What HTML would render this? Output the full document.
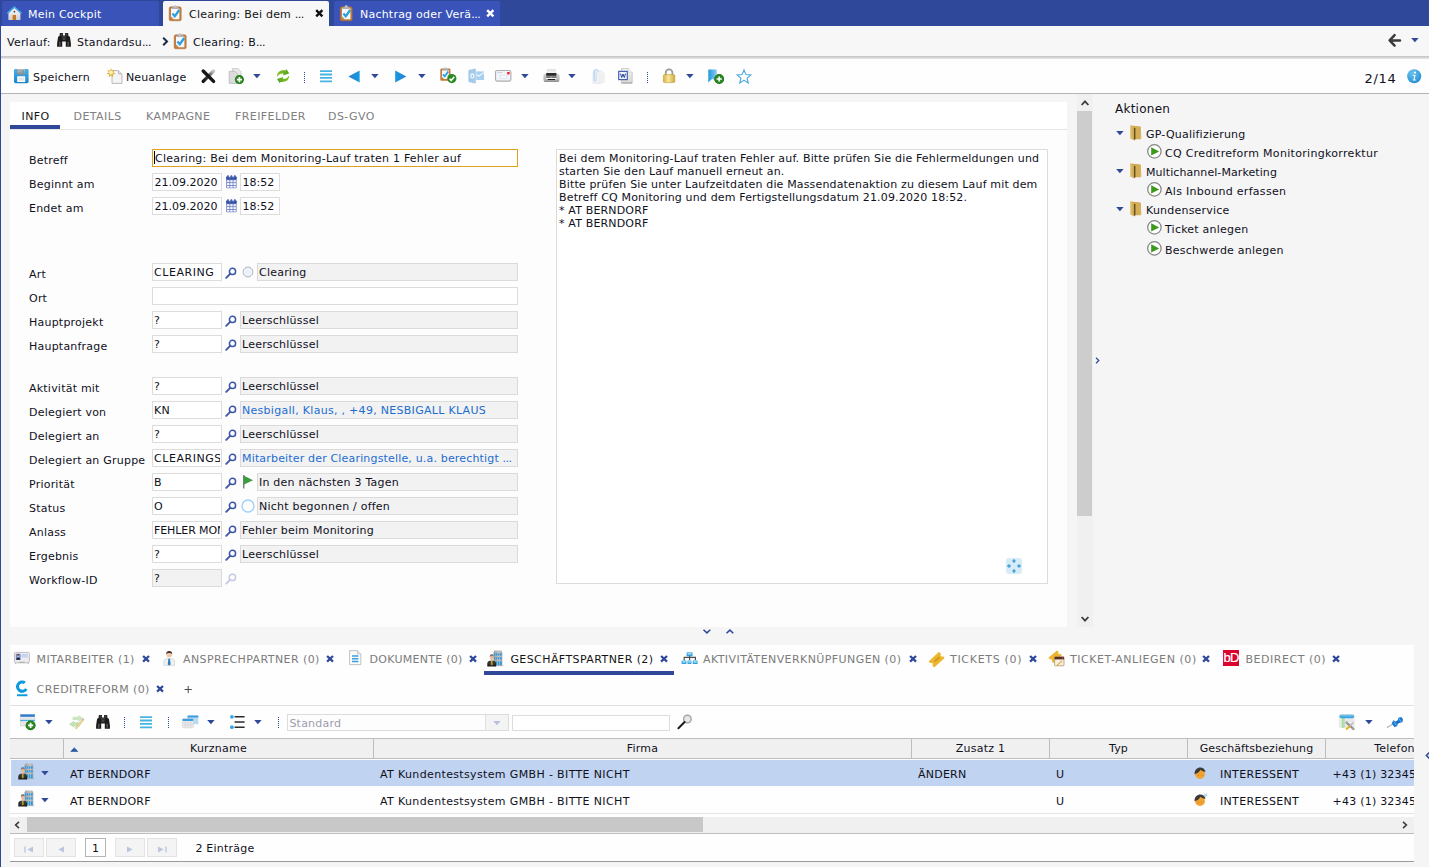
<!DOCTYPE html>
<html lang="de">
<head>
<meta charset="utf-8">
<title>Clearing: Bei dem Monitoring-Lauf traten 1 Fehler auf</title>
<style>
*{box-sizing:border-box;margin:0;padding:0}
html,body{width:1429px;height:867px;overflow:hidden;background:#f5f5f5}
body{position:relative;font-family:"DejaVu Sans","Liberation Sans",sans-serif;font-size:11px;letter-spacing:0.22px;color:#10101c;line-height:14px}
.abs{position:absolute}
svg{display:block;position:absolute;overflow:visible}
.t{position:absolute;white-space:nowrap}
#leftedge{left:0;top:0;width:1px;height:867px;background:#2f4899}
#tabbar{left:0;top:0;width:1429px;height:26px;background:#2f4899}
.ttab{position:absolute;top:1px;height:25px;border-radius:2px 2px 0 0;background:#3a53b8;color:#fff;white-space:nowrap}
.ttab.act{background:#f7f7f7;color:#141414}
.ttab .t{top:6.7px}
#hist{left:2px;top:26px;width:1427px;height:30px;background:#f7f7f7;box-shadow:-1px 0 0 #f7f7f7}
#histshadow{left:1px;top:56px;width:1428px;height:5px;background:linear-gradient(#c2c2c2,#dedede 45%,#f4f4f4 80%,#fefefe)}
#toolbar{left:2px;top:59px;width:1427px;height:34px;background:#fefefe;box-shadow:-1px 0 0 #fefefe}
#tbline{left:1px;top:93px;width:1428px;height:1px;background:#b4b4b4}
/* main panel */
#mainpanel{left:10px;top:102px;width:1057px;height:525px;background:#fdfdfd}
#maintabs{left:10px;top:102px;width:1057px;height:28px;background:#fff;border-bottom:1px solid #e4e4e4}
.mtab{position:absolute;top:7.5px;color:#808080;white-space:nowrap;font-size:11px;letter-spacing:0.42px}
.mtab.act{color:#141414}
#mtabline{left:10px;top:125px;width:50px;height:4px;background:#2f4899}
.lbl{position:absolute;left:29px;white-space:nowrap}
.inp{position:absolute;height:18px;border:1px solid #dcdcdc;background:#fff;white-space:nowrap;overflow:hidden;padding:1.8px 0 0 1px;line-height:14px}
.inp.ro{background:#f2f2f2;border-color:#dadada}
.inp.link{color:#1c6dd0}
.inp.foc{border-color:#dfa01f;padding-left:2px}
.inp.num{letter-spacing:0;padding-left:1.6px}
.inp.up{letter-spacing:0.55px}
.inp.up::after{content:"";position:absolute;right:0;top:0;width:1.5px;height:16px;background:#fff}
#memo{left:556px;top:149px;width:492px;height:435px;border:1px solid #dcdcdc;background:#fff;padding:2px 0 0 2px;line-height:13px;white-space:nowrap;overflow:hidden;letter-spacing:0.16px}
/* scrollbar */
#vs{left:1077px;top:94px;width:16px;height:533px;background:#f0f0f0}
#vsthumb{left:1077px;top:111px;width:15px;height:405px;background:#cdcdcd}
/* right panel */
.tr{position:absolute;white-space:nowrap}
/* bottom panel */
#bpanel{left:10px;top:645px;width:1404px;height:217px;background:#fefefe;border-bottom:1px solid #9a9a9a}
.btab{position:absolute;color:#7c7c7c;white-space:nowrap;font-size:11px;letter-spacing:0.42px}
.btab.act{color:#141414}
.bx{position:absolute;color:#2f4899;font-size:10px;font-weight:bold}
#th{left:10px;top:738px;width:1404px;height:21px;background:#f0f0f0;border-top:1px solid #bdbdbd;border-bottom:1px solid #bdbdbd;overflow:hidden}
.thc{position:absolute;top:0;height:19px;border-left:1px solid #bdbdbd;text-align:center;line-height:19.8px;white-space:nowrap}
.row{position:absolute;left:10px;width:1404px;height:26px;overflow:hidden}
.row .t{top:7.7px}
.pbtn{position:absolute;top:838px;width:30px;height:19px;border:1px solid #e3e3e3;background:#f4f4f4}
</style>
</head>
<body>
<div class="abs" id="tabbar">
  <div class="ttab" style="left:2px;width:157px"><svg style="left:3.4px;top:3px" width="17" height="16" viewBox="0 0 17 16"><defs><linearGradient id="hg" x1="0" y1="0" x2="0" y2="1"><stop offset="0" stop-color="#fff"/><stop offset="1" stop-color="#cfcfcf"/></linearGradient></defs><path d="M3.400 8L9.400 3 15.400 8V16H3.400z" fill="url(#hg)"/><path d="M1.800 8.800L9.400 2 17 8.800 16 10 9.400 4.200 2.800 10z" fill="#4aa6de"/><rect x="7.600" y="11" width="3.400" height="5" fill="#c9782a"/><rect x="8.600" y="6.800" width="1.600" height="1.800" rx="0.500" fill="#444"/></svg><span class="t" style="left:26px">Mein Cockpit</span></div>
  <div class="ttab act" style="left:163px;width:166px"><svg style="left:6px;top:4px" width="13" height="17" viewBox="0 0 13 17"><rect x="0.200" y="1.800" width="12" height="14" rx="1.600" fill="#c47c3a"/><rect x="0.200" y="1.800" width="12" height="14" rx="1.600" fill="none" stroke="#a8642a" stroke-width="0.500"/><path d="M2 3.400h8.400v10.800H4.600L2 11.600z" fill="#f4f7fb"/><path d="M2 11.600h2.600v2.600z" fill="#d9dde3"/><path d="M3.400 1.800h5.600l0.600 2.200H2.800z" fill="#aeb2b6"/><rect x="4.900" y="0.200" width="2.600" height="2.200" rx="1" fill="#c4c7ca"/><path d="M3.400 8.600l2.400 2.600 4.400-6.200" fill="none" stroke="#2a9ede" stroke-width="2.200"/></svg><span class="t" style="left:26px">Clearing: Bei dem <span style="letter-spacing:-0.5px">...</span></span><svg style="left:151.7px;top:8.2px" width="9" height="9" viewBox="0 0 9 9"><path d="M1.200 1.200L7.400 7.400M7.400 1.200L1.200 7.400" stroke="#111" stroke-width="2.400"/></svg></div>
  <div class="ttab" style="left:334px;width:166px"><svg style="left:6px;top:4px" width="13" height="17" viewBox="0 0 13 17"><rect x="0.200" y="1.800" width="12" height="14" rx="1.600" fill="#c47c3a"/><rect x="0.200" y="1.800" width="12" height="14" rx="1.600" fill="none" stroke="#a8642a" stroke-width="0.500"/><path d="M2 3.400h8.400v10.800H4.600L2 11.600z" fill="#f4f7fb"/><path d="M2 11.600h2.600v2.600z" fill="#d9dde3"/><path d="M3.400 1.800h5.600l0.600 2.200H2.800z" fill="#aeb2b6"/><rect x="4.900" y="0.200" width="2.600" height="2.200" rx="1" fill="#c4c7ca"/><path d="M3.400 8.600l2.400 2.600 4.400-6.200" fill="none" stroke="#2a9ede" stroke-width="2.200"/></svg><span class="t" style="left:26px">Nachtrag oder Verä<span style="letter-spacing:-0.5px">...</span></span><svg style="left:151.7px;top:8.2px" width="9" height="9" viewBox="0 0 9 9"><path d="M1.200 1.200L7.400 7.400M7.400 1.200L1.200 7.400" stroke="#fff" stroke-width="2.400"/></svg></div>
</div>
<div class="abs" id="hist">
  <span class="t" style="left:5px;top:9.7px">Verlauf:</span>
  <svg style="left:55px;top:7px" width="14" height="14" viewBox="0 0 14 14"><defs><linearGradient id="bn" x1="0" y1="0" x2="1" y2="0"><stop offset="0" stop-color="#161616"/><stop offset="0.500" stop-color="#6a6a6a"/><stop offset="1" stop-color="#161616"/></linearGradient></defs><path d="M2.900 0h3v2.600h2.200V0h3l0.400 3 1.400 0.800 1 6.800v3.200H8.800V8.600H5.200v5.200H0.100v-3.200l1-6.800 1.400-0.800z" fill="#1c1c1c"/><rect x="1.600" y="8.800" width="2.400" height="4" fill="url(#bn)"/><rect x="10" y="8.800" width="2.400" height="4" fill="url(#bn)"/><rect x="5" y="3.400" width="4" height="1" fill="#555"/><rect x="5.600" y="5.400" width="2.800" height="1.200" fill="#606060"/><rect x="3.700" y="0.400" width="1.200" height="2.400" fill="#4a4a4a"/><rect x="9.100" y="0.400" width="1.200" height="2.400" fill="#4a4a4a"/></svg>
  <span class="t" style="left:75px;top:9.7px">Standardsu<span style="letter-spacing:-0.5px">...</span></span>
  <svg style="left:160px;top:11px" width="7" height="9" viewBox="0 0 7 9"><path d="M1.2 0.8L5 4.5 1.2 8.2" fill="none" stroke="#1a2a44" stroke-width="2"/></svg>
  <svg style="left:171.6px;top:6.6px" width="13" height="17" viewBox="0 0 13 17"><rect x="0.200" y="1.800" width="12" height="14" rx="1.600" fill="#c47c3a"/><rect x="0.200" y="1.800" width="12" height="14" rx="1.600" fill="none" stroke="#a8642a" stroke-width="0.500"/><path d="M2 3.400h8.400v10.800H4.600L2 11.600z" fill="#f4f7fb"/><path d="M2 11.600h2.600v2.600z" fill="#d9dde3"/><path d="M3.400 1.800h5.600l0.600 2.200H2.800z" fill="#aeb2b6"/><rect x="4.900" y="0.200" width="2.600" height="2.200" rx="1" fill="#c4c7ca"/><path d="M3.400 8.600l2.400 2.600 4.400-6.200" fill="none" stroke="#2a9ede" stroke-width="2.200"/></svg>
  <span class="t" style="left:191px;top:9.7px">Clearing: B<span style="letter-spacing:-0.5px">...</span></span>
  <svg style="left:1386.2px;top:8.4px" width="13" height="13" viewBox="0 0 13 13"><path d="M12 6.4H2.2M6.6 1.2L1.6 6.4l5 5.2" fill="none" stroke="#3c3c3c" stroke-width="2.500" stroke-linecap="round" stroke-linejoin="round"/></svg>
  <svg style="left:1408.8px;top:12px" width="8" height="5" viewBox="0 0 8 5"><path d="M0.2 0h7.4L3.9 4.3z" fill="#2f4899"/></svg>
</div>
<div class="abs" id="histshadow"></div>
<div class="abs" id="toolbar">
  <svg style="left:12px;top:10px" width="15" height="15" viewBox="0 0 15 15"><defs><linearGradient id="sg" x1="0" y1="0" x2="0" y2="1"><stop offset="0" stop-color="#48b0ea"/><stop offset="1" stop-color="#1a84cc"/></linearGradient><linearGradient id="sg2" x1="0" y1="0" x2="0" y2="1"><stop offset="0" stop-color="#bcbcbc"/><stop offset="1" stop-color="#8a8a8a"/></linearGradient></defs><rect x="0" y="0" width="14.6" height="14.2" rx="1.4" fill="url(#sg)"/><rect x="3.2" y="0" width="7.8" height="5.6" fill="url(#sg2)"/><rect x="8.4" y="1" width="1.2" height="3.4" fill="#3aa0e0"/><rect x="3.2" y="7.2" width="8" height="5.8" rx="0.6" fill="#fff"/><rect x="4.4" y="8.4" width="5.600" height="3.400" fill="#e6e6e6"/></svg>
  <span class="t" style="left:31px;top:11.8px">Speichern</span>
  <svg style="left:104px;top:9px" width="18" height="16" viewBox="0 0 18 16"><path d="M6 2.6h6.6l3.4 3.4V15.4H6z" fill="#f4f4f4" stroke="#b4b4b4" stroke-width="0.9"/><path d="M12.6 2.6v3.4h3.4" fill="#e0e0e0" stroke="#b4b4b4" stroke-width="0.8"/><path d="M5 0l1 2.8 2.8-1-1.4 2.6 2.4 1.4-2.8 0.6 0.2 3-2.2-2-2.2 2 0.4-3-2.8-0.6 2.4-1.4L1.2 1.8l2.8 1z" fill="#dcb440"/><circle cx="5" cy="4.600" r="2" fill="#fdf0b0"/></svg>
  <span class="t" style="left:124px;top:11.8px;letter-spacing:0.12px">Neuanlage</span>
  <svg style="left:198.600px;top:9.800px" width="16" height="16" viewBox="0 0 16 16"><defs><linearGradient id="xg2" x1="0" y1="1" x2="1" y2="0"><stop offset="0" stop-color="#111"/><stop offset="0.500" stop-color="#4a4a4a"/><stop offset="1" stop-color="#c8c8c8"/></linearGradient></defs><path d="M12.600 2L2.200 12.400" stroke="url(#xg2)" stroke-width="3.400" stroke-linecap="round"/><path d="M2.200 2L12.600 12.400" stroke="#161616" stroke-width="3.400" stroke-linecap="round"/></svg>
  <svg style="left:224.800px;top:8.800px" width="17" height="17" viewBox="0 0 17 17"><path d="M5.4 0.6h5.6l3 3v8.6H5.4z" fill="#e9e9e9" stroke="#c4c4c4" stroke-width="0.8"/><path d="M2.2 3.4h6l2.6 2.8V15.4H2.2z" fill="#dcdcdc" stroke="#b8b8b8" stroke-width="0.8"/><circle cx="12.4" cy="11.6" r="4.5" fill="#2a8a22"/><circle cx="12.4" cy="11.6" r="4.0" fill="none" stroke="#1f6f1a" stroke-width="0.6"/><path d="M9.8 11.6h5.2M12.4 9.0v5.2" stroke="#fff" stroke-width="1.7"/></svg>
  <svg style="left:250.5px;top:15px" width="8" height="5" viewBox="0 0 8 5"><path d="M0.2 0h7.4L3.9 4.3z" fill="#2f4899"/></svg>
  <svg style="left:274.900px;top:9.800px" width="13" height="15" viewBox="0 0 13 15"><defs><linearGradient id="rf" x1="0" y1="0" x2="1" y2="0"><stop offset="0" stop-color="#8cc41e"/><stop offset="1" stop-color="#52a424"/></linearGradient></defs><path id="rfa" d="M0 7.200C0.200 2.600 3.800 0.800 8.800 1.400L9.400 0 12.200 4.400 6.200 6.400 6.400 4.600C3.800 4.400 1.800 5.200 0.600 7.400z" fill="url(#rf)"/><path d="M0 7.200C0.200 2.600 3.800 0.800 8.800 1.400L9.400 0 12.200 4.400 6.200 6.400 6.400 4.600C3.800 4.400 1.800 5.200 0.600 7.400z" fill="url(#rf)" transform="rotate(180 6.100 7.150)"/></svg>
  <svg style="left:302px;top:13px" width="1" height="12" viewBox="0 0 1 12"><path d="M0.5 0v12" stroke="#2f4899" stroke-width="1" stroke-dasharray="1 1"/></svg>
  <svg style="left:318px;top:10.800px" width="12" height="13" viewBox="0 0 12 13"><path d="M0 1.1h12M0 4.500h12M0 7.900h12M0 11.300h12" stroke="#48b4e2" stroke-width="1.800"/></svg>
  <svg style="left:346px;top:10.6px" width="13" height="13" viewBox="0 0 13 13"><defs><linearGradient id="tl" x1="0" y1="0" x2="1" y2="0"><stop offset="0" stop-color="#2a80d2"/><stop offset="1" stop-color="#169ade"/></linearGradient></defs><path d="M0.4 6.4L11.6 0.4v12z" fill="url(#tl)"/></svg>
  <svg style="left:368.8px;top:15px" width="8" height="5" viewBox="0 0 8 5"><path d="M0.2 0h7.4L3.9 4.3z" fill="#2f4899"/></svg>
  <svg style="left:392.4px;top:10.6px" width="13" height="13" viewBox="0 0 13 13"><defs><linearGradient id="tr" x1="0" y1="0" x2="1" y2="0"><stop offset="0" stop-color="#169ade"/><stop offset="1" stop-color="#2a80d2"/></linearGradient></defs><path d="M12.4 6.4L1.2 0.4v12z" fill="url(#tr)"/></svg>
  <svg style="left:415.8px;top:15px" width="8" height="5" viewBox="0 0 8 5"><path d="M0.2 0h7.4L3.9 4.3z" fill="#2f4899"/></svg>
  <svg style="left:438.4px;top:8.4px" width="17" height="17" viewBox="0 0 17 17"><rect x="0.300" y="1.400" width="10.200" height="12.400" rx="1.400" fill="#c47c3a"/><path d="M2 3.200h6.800v8.800H4L2 10z" fill="#f4f7fb"/><path d="M3 1.400h4.800l0.500 2H2.500z" fill="#aeb2b6"/><rect x="4.300" y="0.200" width="2.200" height="1.800" rx="0.800" fill="#c4c7ca"/><path d="M3 7.400l1.800 2 3.400-4.800" fill="none" stroke="#2a9ede" stroke-width="1.800"/><circle cx="11.800" cy="11.600" r="4.600" fill="#2a8a22"/><path d="M9.600 11.800l1.600 1.800 3-3.800" fill="none" stroke="#fff" stroke-width="1.600"/></svg>
  <svg style="left:465.8px;top:9px" width="17" height="16" viewBox="0 0 17 16"><path d="M8.200 3.400h7.800v8.600H8.200z" fill="#a9cfec"/><path d="M8.400 6.800l2.400 1.200 5-3.400" fill="none" stroke="#f2f8fd" stroke-width="1.100"/><path d="M0.400 2L7.800 0.400v15.200L0.400 14z" fill="#a4cae9"/><ellipse cx="4.300" cy="7.900" rx="1.500" ry="2.100" fill="none" stroke="#f2f8fd" stroke-width="1.200"/></svg>
  <svg style="left:493px;top:11px" width="17" height="12" viewBox="0 0 17 12"><rect x="0.5" y="0.5" width="15.4" height="10.6" rx="1.6" fill="#eef4f9" stroke="#adadad" stroke-width="1.100"/><rect x="2.2" y="2.2" width="5" height="0.9" fill="#c8ccd2"/><rect x="5.4" y="5.2" width="6.4" height="3.2" fill="#f8fafc" stroke="#d4d8dc" stroke-width="0.5"/><rect x="12.2" y="2" width="2.4" height="2.4" fill="#ee1c24"/></svg>
  <svg style="left:518.8px;top:15px" width="8" height="5" viewBox="0 0 8 5"><path d="M0.2 0h7.4L3.9 4.3z" fill="#2f4899"/></svg>
  <svg style="left:540.8px;top:10.4px" width="17" height="14" viewBox="0 0 17 14"><defs><linearGradient id="pp" x1="0" y1="0" x2="0" y2="1"><stop offset="0" stop-color="#e0e0e0"/><stop offset="1" stop-color="#fbfbfb"/></linearGradient><linearGradient id="pb" x1="0" y1="0" x2="0" y2="1"><stop offset="0" stop-color="#d6d6d6"/><stop offset="1" stop-color="#a8a8a8"/></linearGradient></defs><rect x="4.400" y="0.300" width="8.200" height="4.600" fill="url(#pp)" stroke="#d4d4d4" stroke-width="0.400"/><rect x="0.400" y="4.800" width="16.200" height="8" rx="2" fill="url(#pb)"/><rect x="3.200" y="4" width="10.200" height="2.800" fill="#2c2c2c"/><rect x="3.200" y="7.600" width="10.200" height="1.100" fill="#262626"/><rect x="7.600" y="7.600" width="1.600" height="1.100" fill="#9a9a9a"/><rect x="3" y="8.800" width="10.600" height="1.200" fill="#f6f6f6"/><rect x="4.600" y="10.100" width="7.600" height="0.900" rx="0.400" fill="#1a1a1a"/><rect x="1.200" y="11.700" width="14.600" height="1.100" rx="0.500" fill="#858585"/></svg>
  <svg style="left:565.8px;top:15px" width="8" height="5" viewBox="0 0 8 5"><path d="M0.2 0h7.4L3.9 4.3z" fill="#2f4899"/></svg>
  <svg style="left:589.4px;top:9.4px" width="14" height="16" viewBox="0 0 14 16"><path d="M6.800 3h4.400l2 2v9.600H6.800z" fill="#f6f6f6" stroke="#e6e6e6" stroke-width="0.600"/><path d="M4.400 3.600h4.800l2 2v9.400H4.400z" fill="#f5f5f5" stroke="#e2e2e2" stroke-width="0.600"/><path d="M2 4.400h5l2 2v9H2z" fill="#f3f3f3" stroke="#dedede" stroke-width="0.600"/><path d="M3.200 12V3.600a1.900 1.900 0 0 1 3.800 0" fill="none" stroke="#b6d6fc" stroke-width="1.400"/><path d="M3.200 12a1 1 0 0 0 2 0V5" fill="none" stroke="#c4defc" stroke-width="1.200"/></svg>
  <svg style="left:616px;top:9px" width="16" height="16" viewBox="0 0 16 16"><defs><linearGradient id="wd" x1="0" y1="0" x2="0" y2="1"><stop offset="0" stop-color="#f2f2f2"/><stop offset="1" stop-color="#d8d8d8"/></linearGradient></defs><path d="M3.400 0.500h7l3.800 3.600v10.800H3.400z" fill="url(#wd)" stroke="#bcbcbc" stroke-width="0.700"/><path d="M10.400 0.500v3.600h3.800" fill="#fafafa" stroke="#c8c8c8" stroke-width="0.500"/><path d="M3.400 15.100h10.800" stroke="#9c9c9c" stroke-width="0.900"/><rect x="0.700" y="3.400" width="8.600" height="8.200" fill="#f4f6fc" stroke="#4662b0" stroke-width="1.200"/><path d="M2.500 5.600l1.200 4 1.300-3.600 1.300 3.600 1.200-4" fill="none" stroke="#2444a0" stroke-width="1"/></svg>
  <svg style="left:645px;top:13px" width="1" height="12" viewBox="0 0 1 12"><path d="M0.5 0v12" stroke="#2f4899" stroke-width="1" stroke-dasharray="1 1"/></svg>
  <svg style="left:660.6px;top:9.4px" width="13" height="15" viewBox="0 0 13 15"><defs><linearGradient id="lg" x1="0" y1="0" x2="1" y2="0"><stop offset="0" stop-color="#d8b246"/><stop offset="0.45" stop-color="#f6e79c"/><stop offset="1" stop-color="#d2a83c"/></linearGradient></defs><path d="M2.800 7V4.600a3.300 3.300 0 0 1 6.600 0V7" fill="none" stroke="#9a9a9a" stroke-width="1.800"/><rect x="0.4" y="6.6" width="11.4" height="8" rx="1.2" fill="url(#lg)" stroke="#c09a34" stroke-width="0.6"/></svg>
  <svg style="left:683.6px;top:15px" width="8" height="5" viewBox="0 0 8 5"><path d="M0.2 0h7.4L3.9 4.3z" fill="#2f4899"/></svg>
  <svg style="left:706px;top:9.8px" width="17" height="16" viewBox="0 0 17 16"><defs><linearGradient id="bg" x1="0" y1="0" x2="1" y2="0"><stop offset="0" stop-color="#1f96de"/><stop offset="1" stop-color="#8cccf0"/></linearGradient></defs><path d="M0.3 0.4h8.4v13.2L4.5 9.6 0.3 13.6z" fill="url(#bg)"/><circle cx="11.2" cy="10" r="4.9" fill="#2a8a22"/><circle cx="11.2" cy="10" r="4.4" fill="none" stroke="#1f6f1a" stroke-width="0.6"/><path d="M8.6 10h5.2M11.2 7.4v5.2" stroke="#fff" stroke-width="1.7"/></svg>
  <svg style="left:734px;top:9.6px" width="16" height="15" viewBox="0 0 16 15"><path d="M8 1l1.9 4.6 5 0.4-3.8 3.2 1.2 4.8L8 11.4 3.7 14l1.2-4.8L1.1 6l5-0.4z" fill="#fff" stroke="#4aa8de" stroke-width="1.1" stroke-linejoin="miter"/></svg>
  <span class="t" style="left:1362.5px;top:12px;font-size:13px;letter-spacing:0.7px;line-height:15px">2/14</span>
  <svg style="left:1404.8px;top:9.8px" width="15" height="15" viewBox="0 0 15 15"><defs><radialGradient id="ig" cx="0.4" cy="0.3" r="0.8"><stop offset="0" stop-color="#6cc4ee"/><stop offset="1" stop-color="#1c8cd0"/></radialGradient></defs><circle cx="7.2" cy="7.2" r="7" fill="url(#ig)"/><circle cx="8" cy="3.6" r="1.1" fill="#fff"/><path d="M6.2 6h2.4l-1 4.6h1.2v1H5.8v-1h0.8l0.7-3.6H6z" fill="#fff"/></svg>
</div>
<div class="abs" id="tbline"></div>
<div class="abs" id="mainpanel"></div>
<div class="abs" id="maintabs">
  <span class="mtab act" style="left:11.5px">INFO</span>
  <span class="mtab" style="left:63.5px">DETAILS</span>
  <span class="mtab" style="left:136px">KAMPAGNE</span>
  <span class="mtab" style="left:225px">FREIFELDER</span>
  <span class="mtab" style="left:318px">DS-GVO</span>
</div>
<div class="abs" id="mtabline"></div>
<span class="lbl" style="top:153.9px">Betreff</span>
<div class="inp foc" style="left:152px;top:149px;width:366px">Clearing: Bei dem Monitoring-Lauf traten 1 Fehler auf</div>
<span class="lbl" style="top:177.9px">Beginnt am</span>
<div class="inp num" style="left:152px;top:173px;width:70px">21.09.2020</div>
<svg style="left:225.800px;top:175.4px" width="11" height="14" viewBox="0 0 11 14"><rect x="0.200" y="1.600" width="10.400" height="11.600" rx="0.800" fill="#6f83c6"/><rect x="0.200" y="1.600" width="10.400" height="3" rx="0.600" fill="#3550a6"/><path d="M2 0.200v2.200M5.400 0.200v2.200M8.800 0.200v2.200" stroke="#4a62b0" stroke-width="1.500"/><path d="M3.700 1v1.400M7.100 1v1.400" stroke="#e8ecf8" stroke-width="1"/><g fill="#fff"><rect x="1.100" y="5.300" width="2.300" height="1.900"/><rect x="4.300" y="5.300" width="2.300" height="1.900"/><rect x="7.500" y="5.300" width="2.300" height="1.900"/><rect x="1.100" y="8.100" width="2.300" height="1.900"/><rect x="4.300" y="8.100" width="2.300" height="1.900"/><rect x="7.500" y="8.100" width="2.300" height="1.900"/><rect x="1.100" y="10.900" width="2.300" height="1.700"/><rect x="4.300" y="10.900" width="2.300" height="1.700"/><rect x="7.500" y="10.900" width="2.300" height="1.700"/></g></svg>
<div class="inp num" style="left:240px;top:173px;width:40px">18:52</div>
<span class="lbl" style="top:201.9px">Endet am</span>
<div class="inp num" style="left:152px;top:197px;width:70px">21.09.2020</div>
<svg style="left:225.800px;top:199.4px" width="11" height="14" viewBox="0 0 11 14"><rect x="0.200" y="1.600" width="10.400" height="11.600" rx="0.800" fill="#6f83c6"/><rect x="0.200" y="1.600" width="10.400" height="3" rx="0.600" fill="#3550a6"/><path d="M2 0.200v2.200M5.400 0.200v2.200M8.800 0.200v2.200" stroke="#4a62b0" stroke-width="1.500"/><path d="M3.700 1v1.400M7.100 1v1.400" stroke="#e8ecf8" stroke-width="1"/><g fill="#fff"><rect x="1.100" y="5.300" width="2.300" height="1.900"/><rect x="4.300" y="5.300" width="2.300" height="1.900"/><rect x="7.500" y="5.300" width="2.300" height="1.900"/><rect x="1.100" y="8.100" width="2.300" height="1.900"/><rect x="4.300" y="8.100" width="2.300" height="1.900"/><rect x="7.500" y="8.100" width="2.300" height="1.900"/><rect x="1.100" y="10.900" width="2.300" height="1.700"/><rect x="4.300" y="10.900" width="2.300" height="1.700"/><rect x="7.500" y="10.900" width="2.300" height="1.700"/></g></svg>
<div class="inp num" style="left:240px;top:197px;width:40px">18:52</div>
<span class="lbl" style="top:267.9px">Art</span>
<div class="inp up" style="left:152px;top:263px;width:70px">CLEARING</div>
<svg style="left:225px;top:266.8px" width="12" height="12" viewBox="0 0 12 12"><circle cx="7.500" cy="4.400" r="3.100" fill="none" stroke="#3d56a6" stroke-width="1.500"/><path d="M5.200 6.800L1.200 10.800" stroke="#3d56a6" stroke-width="1.900" stroke-linecap="round"/></svg>
<svg style="left:242px;top:266px" width="12" height="12" viewBox="0 0 12 12"><circle cx="6" cy="6" r="4.9" fill="#eef2fb" stroke="#b0b5ba" stroke-width="1"/></svg>
<div class="inp ro" style="left:257px;top:263px;width:261px">Clearing</div>
<span class="lbl" style="top:291.9px">Ort</span>
<div class="inp" style="left:152px;top:287px;width:366px"></div>
<span class="lbl" style="top:315.9px">Hauptprojekt</span>
<div class="inp" style="left:152px;top:311px;width:70px">?</div>
<svg style="left:225px;top:314.8px" width="12" height="12" viewBox="0 0 12 12"><circle cx="7.500" cy="4.400" r="3.100" fill="none" stroke="#3d56a6" stroke-width="1.500"/><path d="M5.200 6.800L1.200 10.800" stroke="#3d56a6" stroke-width="1.900" stroke-linecap="round"/></svg>
<div class="inp ro" style="left:240px;top:311px;width:278px">Leerschlüssel</div>
<span class="lbl" style="top:339.9px">Hauptanfrage</span>
<div class="inp" style="left:152px;top:335px;width:70px">?</div>
<svg style="left:225px;top:338.8px" width="12" height="12" viewBox="0 0 12 12"><circle cx="7.500" cy="4.400" r="3.100" fill="none" stroke="#3d56a6" stroke-width="1.500"/><path d="M5.200 6.800L1.200 10.800" stroke="#3d56a6" stroke-width="1.900" stroke-linecap="round"/></svg>
<div class="inp ro" style="left:240px;top:335px;width:278px">Leerschlüssel</div>
<span class="lbl" style="top:381.9px">Aktivität mit</span>
<div class="inp" style="left:152px;top:377px;width:70px">?</div>
<svg style="left:225px;top:380.8px" width="12" height="12" viewBox="0 0 12 12"><circle cx="7.500" cy="4.400" r="3.100" fill="none" stroke="#3d56a6" stroke-width="1.500"/><path d="M5.200 6.800L1.200 10.800" stroke="#3d56a6" stroke-width="1.900" stroke-linecap="round"/></svg>
<div class="inp ro" style="left:240px;top:377px;width:278px">Leerschlüssel</div>
<span class="lbl" style="top:405.9px">Delegiert von</span>
<div class="inp" style="left:152px;top:401px;width:70px">KN</div>
<svg style="left:225px;top:404.8px" width="12" height="12" viewBox="0 0 12 12"><circle cx="7.500" cy="4.400" r="3.100" fill="none" stroke="#3d56a6" stroke-width="1.500"/><path d="M5.200 6.800L1.200 10.800" stroke="#3d56a6" stroke-width="1.900" stroke-linecap="round"/></svg>
<div class="inp ro link" style="left:240px;top:401px;width:278px"><span style="letter-spacing:0.29px">Nesbigall, Klaus, , +49, NESBIGALL KLAUS</span></div>
<span class="lbl" style="top:429.9px">Delegiert an</span>
<div class="inp" style="left:152px;top:425px;width:70px">?</div>
<svg style="left:225px;top:428.8px" width="12" height="12" viewBox="0 0 12 12"><circle cx="7.500" cy="4.400" r="3.100" fill="none" stroke="#3d56a6" stroke-width="1.500"/><path d="M5.200 6.800L1.200 10.800" stroke="#3d56a6" stroke-width="1.900" stroke-linecap="round"/></svg>
<div class="inp ro" style="left:240px;top:425px;width:278px">Leerschlüssel</div>
<span class="lbl" style="top:453.9px">Delegiert an Gruppe</span>
<div class="inp up" style="left:152px;top:449px;width:70px">CLEARINGS</div>
<svg style="left:225px;top:452.8px" width="12" height="12" viewBox="0 0 12 12"><circle cx="7.500" cy="4.400" r="3.100" fill="none" stroke="#3d56a6" stroke-width="1.500"/><path d="M5.200 6.800L1.200 10.800" stroke="#3d56a6" stroke-width="1.900" stroke-linecap="round"/></svg>
<div class="inp ro link" style="left:240px;top:449px;width:278px"><span style="letter-spacing:0.17px">Mitarbeiter der Clearingstelle, u.a. berechtigt <span style="letter-spacing:-0.500px">...</span></span></div>
<span class="lbl" style="top:477.9px">Priorität</span>
<div class="inp" style="left:152px;top:473px;width:70px">B</div>
<svg style="left:225px;top:476.8px" width="12" height="12" viewBox="0 0 12 12"><circle cx="7.500" cy="4.400" r="3.100" fill="none" stroke="#3d56a6" stroke-width="1.500"/><path d="M5.200 6.800L1.200 10.800" stroke="#3d56a6" stroke-width="1.900" stroke-linecap="round"/></svg>
<svg style="left:242.6px;top:475.2px" width="11" height="14" viewBox="0 0 11 14"><path d="M0.8 0v13.6" stroke="#4a5c62" stroke-width="1.1"/><path d="M0.6 0.4L10 5.2 0.6 9.8z" fill="#3d9b42"/></svg>
<div class="inp ro" style="left:257px;top:473px;width:261px">In den nächsten 3 Tagen</div>
<span class="lbl" style="top:501.9px">Status</span>
<div class="inp" style="left:152px;top:497px;width:70px">O</div>
<svg style="left:225px;top:500.8px" width="12" height="12" viewBox="0 0 12 12"><circle cx="7.500" cy="4.400" r="3.100" fill="none" stroke="#3d56a6" stroke-width="1.500"/><path d="M5.200 6.800L1.200 10.800" stroke="#3d56a6" stroke-width="1.900" stroke-linecap="round"/></svg>
<svg style="left:241px;top:499px" width="14" height="14" viewBox="0 0 14 14"><circle cx="7" cy="7" r="6" fill="#fff" stroke="#9ccffb" stroke-width="1.300"/></svg>
<div class="inp ro" style="left:257px;top:497px;width:261px">Nicht begonnen / offen</div>
<span class="lbl" style="top:525.9px">Anlass</span>
<div class="inp up" style="left:152px;top:521px;width:70px"><span style="letter-spacing:-0.1px">FEHLER MON</span></div>
<svg style="left:225px;top:524.8px" width="12" height="12" viewBox="0 0 12 12"><circle cx="7.500" cy="4.400" r="3.100" fill="none" stroke="#3d56a6" stroke-width="1.500"/><path d="M5.200 6.800L1.200 10.800" stroke="#3d56a6" stroke-width="1.900" stroke-linecap="round"/></svg>
<div class="inp ro" style="left:240px;top:521px;width:278px">Fehler beim Monitoring</div>
<span class="lbl" style="top:549.9px">Ergebnis</span>
<div class="inp" style="left:152px;top:545px;width:70px">?</div>
<svg style="left:225px;top:548.8px" width="12" height="12" viewBox="0 0 12 12"><circle cx="7.500" cy="4.400" r="3.100" fill="none" stroke="#3d56a6" stroke-width="1.500"/><path d="M5.200 6.800L1.200 10.800" stroke="#3d56a6" stroke-width="1.900" stroke-linecap="round"/></svg>
<div class="inp ro" style="left:240px;top:545px;width:278px">Leerschlüssel</div>
<span class="lbl" style="top:573.9px">Workflow-ID</span>
<div class="inp ro" style="left:152px;top:569px;width:70px">?</div>
<svg style="left:225px;top:572.8px" width="12" height="12" viewBox="0 0 12 12"><circle cx="7.4" cy="4.4" r="3.2" fill="none" stroke="#c4cce4" stroke-width="1.5"/><path d="M5 6.8L1.2 10.6" stroke="#c4cce4" stroke-width="1.9" stroke-linecap="round"/></svg>
<div class="abs" id="memo">Bei dem Monitoring-Lauf traten Fehler auf. Bitte prüfen Sie die Fehlermeldungen und<br>starten Sie den Lauf manuell erneut an.<br>Bitte prüfen Sie unter Laufzeitdaten die Massendatenaktion zu diesem Lauf mit dem<br>Betreff CQ Monitoring und dem Fertigstellungsdatum 21.09.2020 18:52.<br>* AT BERNDORF<br>* AT BERNDORF</div>
<svg style="left:1006px;top:558px" width="16" height="16" viewBox="0 0 16 16"><rect x="0" y="0" width="16" height="16" rx="3" fill="#d7ecf8"/><g fill="#4aa4d6"><path d="M8 0.800l1.900 2.200L8 5.200 6.100 3z"/><path d="M8 10.800l1.900 2.200L8 15.200 6.100 13z"/><path d="M0.800 8l2.200-1.900L5.200 8 3 9.900z"/><path d="M10.800 8l2.200-1.900L15.200 8 13 9.900z"/></g></svg>
<div class="abs" style="left:154px;top:151px;width:1px;height:13px;background:#000"></div>
<div class="abs" id="vs"></div><div class="abs" id="vsthumb"></div>
<svg style="left:1080.5px;top:100px" width="8" height="6" viewBox="0 0 8 6"><path d="M0.600 5L4 1.400 7.400 5" fill="none" stroke="#3c3c3c" stroke-width="1.800"/></svg><svg style="left:1080.5px;top:615.8px" width="8" height="6" viewBox="0 0 8 6"><path d="M0.600 1L4 4.600 7.400 1" fill="none" stroke="#3c3c3c" stroke-width="1.800"/></svg>
<svg style="left:1095px;top:357px" width="5" height="7" viewBox="0 0 5 7"><path d="M1 0.800L3.800 3.500 1 6.200" fill="none" stroke="#2f4899" stroke-width="1.2"/></svg>
<svg style="left:702.5px;top:629.4px" width="8" height="5" viewBox="0 0 8 5"><path d="M0.500 0.700L3.900 3.900 7.300 0.700" fill="none" stroke="#2f4899" stroke-width="1.500"/></svg><svg style="left:725.7px;top:629.4px" width="8" height="5" viewBox="0 0 8 5"><path d="M0.500 4.300L3.900 1.100 7.300 4.300" fill="none" stroke="#2f4899" stroke-width="1.500"/></svg>
<span class="t" style="left:1115px;top:101.8px;font-size:12px;letter-spacing:0.25px;line-height:15px">Aktionen</span>
<svg style="left:1115.800px;top:130.8px" width="8" height="5" viewBox="0 0 8 5"><path d="M0.2 0h7.4L3.9 4.3z" fill="#2f4899"/></svg><svg style="left:1130px;top:125px" width="12" height="16" viewBox="0 0 12 16"><defs><linearGradient id="fg" x1="0" y1="0" x2="1" y2="0"><stop offset="0" stop-color="#e2c272"/><stop offset="1" stop-color="#c9a048"/></linearGradient></defs><path d="M0.200 0.400l10.400 1.200v12.600l-6.400 0z" fill="#cfa850"/><path d="M0.200 0.400L4.600 1.600V15.600L0.200 13.400z" fill="url(#fg)"/><path d="M5.200 2.200h5.600v11.600H5.200z" fill="#d4ae56"/><path d="M4.800 3v11.600" stroke="#3a2c10" stroke-width="1"/><path d="M10.800 9.600l0.800 0.200v4l-0.800 0z" fill="#e4d4a4"/></svg>
<span class="tr" style="left:1146px;top:127.8px">GP-Qualifizierung</span>
<svg style="left:1146.600px;top:144.3px" width="15" height="15" viewBox="0 0 15 15"><circle cx="7.400" cy="7.400" r="6.700" fill="#fff" stroke="#868686" stroke-width="1.250"/><path d="M4.200 3.300L12.200 7.400 4.200 11.500z" fill="#3b9a1c"/></svg>
<span class="tr" style="letter-spacing:0.31px;left:1165px;top:146.8px">CQ Creditreform Monitoringkorrektur</span>
<svg style="left:1115.800px;top:168.8px" width="8" height="5" viewBox="0 0 8 5"><path d="M0.2 0h7.4L3.9 4.3z" fill="#2f4899"/></svg><svg style="left:1130px;top:163px" width="12" height="16" viewBox="0 0 12 16"><defs><linearGradient id="fg" x1="0" y1="0" x2="1" y2="0"><stop offset="0" stop-color="#e2c272"/><stop offset="1" stop-color="#c9a048"/></linearGradient></defs><path d="M0.200 0.400l10.400 1.200v12.600l-6.400 0z" fill="#cfa850"/><path d="M0.200 0.400L4.600 1.600V15.600L0.200 13.400z" fill="url(#fg)"/><path d="M5.200 2.200h5.600v11.600H5.200z" fill="#d4ae56"/><path d="M4.800 3v11.600" stroke="#3a2c10" stroke-width="1"/><path d="M10.800 9.600l0.800 0.200v4l-0.800 0z" fill="#e4d4a4"/></svg>
<span class="tr" style="letter-spacing:0.08px;left:1146px;top:165.8px">Multichannel-Marketing</span>
<svg style="left:1146.600px;top:182.3px" width="15" height="15" viewBox="0 0 15 15"><circle cx="7.400" cy="7.400" r="6.700" fill="#fff" stroke="#868686" stroke-width="1.250"/><path d="M4.200 3.300L12.200 7.400 4.200 11.500z" fill="#3b9a1c"/></svg>
<span class="tr" style="letter-spacing:0.3px;left:1165px;top:184.8px">Als Inbound erfassen</span>
<svg style="left:1115.800px;top:206.8px" width="8" height="5" viewBox="0 0 8 5"><path d="M0.2 0h7.4L3.9 4.3z" fill="#2f4899"/></svg><svg style="left:1130px;top:201px" width="12" height="16" viewBox="0 0 12 16"><defs><linearGradient id="fg" x1="0" y1="0" x2="1" y2="0"><stop offset="0" stop-color="#e2c272"/><stop offset="1" stop-color="#c9a048"/></linearGradient></defs><path d="M0.200 0.400l10.400 1.200v12.600l-6.400 0z" fill="#cfa850"/><path d="M0.200 0.400L4.600 1.600V15.600L0.200 13.400z" fill="url(#fg)"/><path d="M5.200 2.200h5.600v11.600H5.200z" fill="#d4ae56"/><path d="M4.800 3v11.600" stroke="#3a2c10" stroke-width="1"/><path d="M10.800 9.600l0.800 0.200v4l-0.800 0z" fill="#e4d4a4"/></svg>
<span class="tr" style="left:1146px;top:203.8px">Kundenservice</span>
<svg style="left:1146.600px;top:220.3px" width="15" height="15" viewBox="0 0 15 15"><circle cx="7.400" cy="7.400" r="6.700" fill="#fff" stroke="#868686" stroke-width="1.250"/><path d="M4.200 3.300L12.200 7.400 4.200 11.500z" fill="#3b9a1c"/></svg>
<span class="tr" style="left:1165px;top:222.8px">Ticket anlegen</span>
<svg style="left:1146.600px;top:241.3px" width="15" height="15" viewBox="0 0 15 15"><circle cx="7.400" cy="7.400" r="6.700" fill="#fff" stroke="#868686" stroke-width="1.250"/><path d="M4.200 3.300L12.200 7.400 4.200 11.500z" fill="#3b9a1c"/></svg>
<span class="tr" style="left:1165px;top:243.8px">Beschwerde anlegen</span>
<div class="abs" id="bpanel"></div>
<svg style="left:14.4px;top:652.4px" width="16" height="12" viewBox="0 0 16 12"><rect x="0.400" y="0.400" width="15" height="10.400" rx="1.200" fill="#ececee" stroke="#b4b4b8" stroke-width="0.800"/><rect x="1.800" y="1.800" width="4.800" height="6" fill="#6a8cdc"/><circle cx="4.200" cy="3.800" r="1.300" fill="#e8b89a"/><path d="M3 3.400c0-2 2.400-2 2.400 0z" fill="#5a3a2a"/><path d="M2.200 7.800c0-2.600 4-2.600 4 0z" fill="#1c1c1c"/><rect x="7.800" y="2.200" width="5.800" height="3.200" fill="#b4c6ee"/><path d="M8.400 3.200h4.600M8.400 4.400h4.600" stroke="#d8e2f8" stroke-width="0.600"/><path d="M1.600 10.800v1M14.200 10.800v1M5.200 10.400h5.600" stroke="#b0b0b6" stroke-width="1.200"/></svg>
<span class="btab" style="left:36.6px;top:652.8px">MITARBEITER (1)</span>
<svg style="left:141.6px;top:654.800px" width="9" height="8" viewBox="0 0 9 8"><path d="M1.100 1L7 6.600M7 1L1.100 6.600" stroke="#2f4899" stroke-width="2.300"/></svg>
<svg style="left:163px;top:649.6px" width="13" height="16" viewBox="0 0 13 16"><path d="M0.800 15.400v-4.200c0-2 2.200-2.800 5.400-2.800s5.400 0.800 5.400 2.800v4.200z" fill="#eef0f2" stroke="#c8ccd0" stroke-width="0.600"/><path d="M5.400 8.800h1.600l0.600 5.600-1.400 1-1.400-1z" fill="#2a78b4"/><circle cx="6.200" cy="4.400" r="2.900" fill="#f0c8a8"/><path d="M3.200 4.200c-0.400-4.400 6.400-4.400 6 0-1-1.600-5-1.600-6 0z" fill="#3a2c24"/></svg>
<span class="btab" style="left:183px;top:652.8px">ANSPRECHPARTNER (0)</span>
<svg style="left:326.4px;top:654.800px" width="9" height="8" viewBox="0 0 9 8"><path d="M1.100 1L7 6.600M7 1L1.100 6.600" stroke="#2f4899" stroke-width="2.300"/></svg>
<svg style="left:349px;top:650.4px" width="13" height="16" viewBox="0 0 13 16"><path d="M0.600 0.600h7.800l3.400 3.400v10.600H0.600z" fill="#fbfbfb" stroke="#b8bcc0" stroke-width="0.900"/><path d="M8.400 0.600v3.400h3.400" fill="#e4e6e8" stroke="#b8bcc0" stroke-width="0.700"/><path d="M3 6h6.400M3 8.800h6.400M3 11.600h6.400" stroke="#3a9ee0" stroke-width="1.500"/></svg>
<span class="btab" style="letter-spacing:0.27px;left:369.6px;top:652.8px">DOKUMENTE (0)</span>
<svg style="left:468.6px;top:654.800px" width="9" height="8" viewBox="0 0 9 8"><path d="M1.100 1L7 6.600M7 1L1.100 6.600" stroke="#2f4899" stroke-width="2.300"/></svg>
<svg style="left:486.6px;top:649.6px" width="17" height="17" viewBox="0 0 17 17"><defs><linearGradient id="gb" x1="0" y1="0" x2="1" y2="0"><stop offset="0" stop-color="#9a9c9e"/><stop offset="0.600" stop-color="#c4c4c4"/><stop offset="1" stop-color="#a8a8a8"/></linearGradient><radialGradient id="gs" cx="0.500" cy="0.300" r="0.800"><stop offset="0" stop-color="#4a4a4a"/><stop offset="1" stop-color="#161616"/></radialGradient></defs><path d="M6.500 2.600l1-2.200h6.800l1 2.200V15.800H6.500z" fill="url(#gb)"/><rect x="6.500" y="15.400" width="9.800" height="0.800" fill="#b4b4b4"/><g fill="#2a9ce2"><rect x="6.900" y="3.300" width="1.400" height="2.300"/><rect x="9.000" y="3.300" width="1.300" height="2.300"/><rect x="11.000" y="3.300" width="1.300" height="2.300"/><rect x="13.000" y="3.300" width="1.700" height="2.300"/><rect x="6.900" y="7.300" width="1.400" height="2.100"/><rect x="9.000" y="7.300" width="1.300" height="2.100"/><rect x="11.000" y="7.300" width="1.300" height="2.100"/><rect x="13.000" y="7.300" width="1.700" height="2.100"/><rect x="6.900" y="11.300" width="1.400" height="4.000"/><rect x="9.000" y="11.300" width="1.300" height="4.000"/><rect x="11.000" y="11.300" width="1.300" height="4.000"/><rect x="13.000" y="11.300" width="1.700" height="4.000"/></g><path d="M0.300 16.400v-2.800c0-2.200 1.600-3.200 4.400-3.200s4.400 1 4.400 3.200v2.800z" fill="url(#gs)"/><path d="M4.100 10.400h1.300l0.400 4-1 1.200-1-1.200z" fill="#b09a1c"/><path d="M3.600 10.400l1.100 1 1.100-1z" fill="#e8e4d0"/><ellipse cx="4.800" cy="7.800" rx="1.700" ry="2.400" fill="#f0b898"/><path d="M2.800 7c-0.200-3.800 4.200-3.800 4-0.200-0.800-1-3-1.200-4 0.200z" fill="#7c7c7c"/></svg>
<span class="btab act" style="left:510.4px;top:652.8px">GESCHÄFTSPARTNER (2)</span>
<svg style="left:660px;top:654.800px" width="9" height="8" viewBox="0 0 9 8"><path d="M1.100 1L7 6.600M7 1L1.100 6.600" stroke="#2f4899" stroke-width="2.300"/></svg>
<svg style="left:681.2px;top:652px" width="17" height="14" viewBox="0 0 17 14"><defs><linearGradient id="og" x1="0" y1="0" x2="0" y2="1"><stop offset="0" stop-color="#7cd0f4"/><stop offset="1" stop-color="#2496d8"/></linearGradient></defs><path d="M8.600 4v4.400M3.200 8.600V5.400h11.200v3.200" fill="none" stroke="#505050" stroke-width="1.200"/><rect x="5.600" y="0.100" width="6" height="4.100" rx="0.500" fill="url(#og)"/><rect x="0.500" y="8.200" width="5" height="3.900" rx="0.800" fill="url(#og)"/><rect x="6.400" y="8.200" width="4.200" height="3.900" rx="0.800" fill="url(#og)"/><rect x="11.700" y="8.200" width="5" height="3.900" rx="0.800" fill="url(#og)"/><path d="M7.200 1.800h2.800M1.800 10h2.400M7.400 10h2.200M13 10h2.400" stroke="#d8f0fc" stroke-width="0.900"/></svg>
<span class="btab" style="left:703px;top:652.8px">AKTIVITÄTENVERKNÜPFUNGEN (0)</span>
<svg style="left:908.6px;top:654.800px" width="9" height="8" viewBox="0 0 9 8"><path d="M1.100 1L7 6.600M7 1L1.100 6.600" stroke="#2f4899" stroke-width="2.300"/></svg>
<svg style="left:928px;top:650.6px" width="17" height="16" viewBox="0 0 17 16"><path d="M0.600 10.400L11 0.800l2 2.200a1.400 1.400 0 0 0 2 2.200l1.600 1.800L6.200 16.400 4.400 14.400a1.400 1.400 0 0 0-2-2.200z" fill="#ecb52e"/><path d="M6 9.800l4.800-4.200 1.200 1.400-4.800 4.200z" fill="#d09a1c"/></svg>
<span class="btab" style="letter-spacing:0.7px;left:950px;top:652.8px">TICKETS (0)</span>
<svg style="left:1028.6px;top:654.800px" width="9" height="8" viewBox="0 0 9 8"><path d="M1.100 1L7 6.600M7 1L1.100 6.600" stroke="#2f4899" stroke-width="2.300"/></svg>
<svg style="left:1048px;top:650px" width="17" height="17" viewBox="0 0 17 17"><path d="M0.400 7.800L9 0.400l1.600 1.600a1.200 1.200 0 0 0 1.800 1.800l1.400 1.600-8.600 7.600-1.400-1.600a1.200 1.200 0 0 0-1.800-1.800z" fill="#ecb52e"/><rect x="6.600" y="6.800" width="9.400" height="9" rx="0.800" fill="#f6f0e4" stroke="#a88a5a" stroke-width="0.700"/><rect x="6.600" y="6.800" width="9.400" height="2.600" fill="#5a3218"/><circle cx="14.600" cy="8" r="0.700" fill="#e83ca0"/><path d="M8.600 15l5-4.600 0.800 0.800-5 4.600z" fill="#e8a83c"/></svg>
<span class="btab" style="letter-spacing:0.56px;left:1070px;top:652.8px">TICKET-ANLIEGEN (0)</span>
<svg style="left:1202.4px;top:654.800px" width="9" height="8" viewBox="0 0 9 8"><path d="M1.100 1L7 6.600M7 1L1.100 6.600" stroke="#2f4899" stroke-width="2.300"/></svg>
<svg style="left:1223px;top:650px" width="16" height="16" viewBox="0 0 16 16"><rect width="16" height="16" fill="#d9052f"/></svg>
<span class="btab" style="letter-spacing:0.54px;left:1245.4px;top:652.8px">BEDIRECT (0)</span>
<svg style="left:1332px;top:654.800px" width="9" height="8" viewBox="0 0 9 8"><path d="M1.100 1L7 6.600M7 1L1.100 6.600" stroke="#2f4899" stroke-width="2.300"/></svg>
<span class="t" style="left:1223.600px;top:651px;color:#fff;font-family:'Liberation Sans',sans-serif;font-size:13px;letter-spacing:-0.900px;-webkit-text-stroke:0.2px #fff">bD</span>
<div class="abs" style="left:484px;top:671px;width:190px;height:4px;background:#2f4899"></div>
<svg style="left:15.800px;top:679.600px" width="13" height="17" viewBox="0 0 13 17"><path d="M8.900 2.750A4.700 4.700 0 1 0 10.300 8.950" fill="none" stroke="#0a9ae2" stroke-width="3"/><rect x="1" y="14.300" width="10.400" height="1.900" fill="#0a9ae2"/></svg>
<span class="btab" style="left:36.600px;top:682.8px">CREDITREFORM (0)</span>
<svg style="left:155.600px;top:685.400px" width="9" height="8" viewBox="0 0 9 8"><path d="M1.100 1L7 6.600M7 1L1.100 6.600" stroke="#2f4899" stroke-width="2.300"/></svg>
<svg style="left:183.600px;top:685px" width="9" height="9" viewBox="0 0 9 9"><path d="M0.600 4.500h7.200M4.200 0.900v7.200" stroke="#4a4a4a" stroke-width="1"/></svg>
<div class="abs" style="left:10px;top:705px;width:1404px;height:1px;background:#e2e2e2"></div>
<svg style="left:20.200px;top:713.600px" width="17" height="17" viewBox="0 0 17 17"><rect x="0.400" y="0.400" width="14.400" height="11.600" fill="#f0f0f0" stroke="#c8c8c8" stroke-width="0.600"/><rect x="0.400" y="0.400" width="14.400" height="2.400" fill="#2a78c8"/><rect x="0.400" y="0.400" width="14.400" height="0.700" fill="#6aa8e0"/><rect x="0.400" y="5.800" width="14.400" height="1.300" fill="#3aa8e8"/><path d="M0.400 4.200h14.400M0.400 8.600h14.400M0.400 10.400h14.400M4 2.800v9.200M7.600 2.800v9.200M11.200 2.800v9.200" stroke="#d8d8d8" stroke-width="0.500"/><circle cx="10.6" cy="11.4" r="4.9" fill="#2a8a22"/><circle cx="10.6" cy="11.4" r="4.4" fill="none" stroke="#1f6f1a" stroke-width="0.6"/><path d="M8.0 11.4h5.2M10.6 8.8v5.2" stroke="#fff" stroke-width="1.7"/></svg><svg style="left:44.600px;top:720px" width="8" height="5" viewBox="0 0 8 5"><path d="M0.2 0h7.4L3.9 4.3z" fill="#2f4899"/></svg><svg style="left:67.800px;top:714px" width="17" height="17" viewBox="0 0 17 17"><path d="M4.600 2.800h6V1l5 3.500-5 3.500V6.200h-6z" fill="#cce6be"/><path d="M11.400 8.200h-5V6.600L0.800 10.200l5.600 3.600v-1.600h5z" fill="#c4e2b4"/><rect x="5.800" y="6" width="3.600" height="1.500" fill="#fff"/><path d="M15.200 5.600L7.800 14.600" stroke="#b8a868" stroke-width="1.800"/><path d="M15.200 5.600L7.800 14.600" stroke="#f6e8a0" stroke-width="1.100"/><circle cx="15.300" cy="5.400" r="0.900" fill="#f0a0a8"/></svg><svg style="left:96px;top:715px" width="14" height="14" viewBox="0 0 14 14"><defs><linearGradient id="bn" x1="0" y1="0" x2="1" y2="0"><stop offset="0" stop-color="#161616"/><stop offset="0.500" stop-color="#6a6a6a"/><stop offset="1" stop-color="#161616"/></linearGradient></defs><path d="M2.900 0h3v2.600h2.200V0h3l0.400 3 1.400 0.800 1 6.800v3.200H8.800V8.600H5.200v5.200H0.100v-3.200l1-6.800 1.400-0.800z" fill="#1c1c1c"/><rect x="1.600" y="8.800" width="2.400" height="4" fill="url(#bn)"/><rect x="10" y="8.800" width="2.400" height="4" fill="url(#bn)"/><rect x="5" y="3.400" width="4" height="1" fill="#555"/><rect x="5.600" y="5.400" width="2.800" height="1.200" fill="#606060"/><rect x="3.700" y="0.400" width="1.200" height="2.400" fill="#4a4a4a"/><rect x="9.100" y="0.400" width="1.200" height="2.400" fill="#4a4a4a"/></svg><svg style="left:124px;top:716.600px" width="1" height="12" viewBox="0 0 1 12"><path d="M0.5 0v12" stroke="#2f4899" stroke-width="1" stroke-dasharray="1 1"/></svg><svg style="left:139.800px;top:716px" width="12" height="13" viewBox="0 0 12 13"><path d="M0 1.1h12M0 4.500h12M0 7.900h12M0 11.300h12" stroke="#48b4e2" stroke-width="1.800"/></svg><svg style="left:168px;top:716.600px" width="1" height="12" viewBox="0 0 1 12"><path d="M0.5 0v12" stroke="#2f4899" stroke-width="1" stroke-dasharray="1 1"/></svg><svg style="left:182px;top:715px" width="17" height="14" viewBox="0 0 17 14"><rect x="5.400" y="0.400" width="11" height="8.800" rx="1" fill="#b8daf2"/><rect x="5.400" y="0.400" width="11" height="2.200" rx="1" fill="#3a9ee0"/><rect x="0.400" y="3.800" width="11" height="9" rx="1" fill="#eeeeee" stroke="#c8c8c8" stroke-width="0.500"/><rect x="0.400" y="3.800" width="11" height="2.200" rx="1" fill="#3a9ee0"/><path d="M0.600 8h10.600M0.600 10.200h10.600M3.200 6v6.800M6 6v6.800M8.800 6v6.800" stroke="#d0d0d0" stroke-width="0.600"/></svg><svg style="left:206.800px;top:720px" width="8" height="5" viewBox="0 0 8 5"><path d="M0.2 0h7.4L3.9 4.3z" fill="#2f4899"/></svg><svg style="left:229.600px;top:715px" width="15" height="14" viewBox="0 0 15 14"><path d="M4.600 1.800h10M4.600 7h10M4.600 12.200h10" stroke="#2a2a2a" stroke-width="1.500"/><circle cx="1.900" cy="1.800" r="1.900" fill="#3aa4e6"/><circle cx="1.900" cy="12.200" r="1.900" fill="#3aa4e6"/></svg><svg style="left:254px;top:720px" width="8" height="5" viewBox="0 0 8 5"><path d="M0.2 0h7.4L3.9 4.3z" fill="#2f4899"/></svg><svg style="left:278px;top:716.600px" width="1" height="12" viewBox="0 0 1 12"><path d="M0.5 0v12" stroke="#2f4899" stroke-width="1" stroke-dasharray="1 1"/></svg>
<div class="abs" style="left:287px;top:714px;width:222px;height:17px;border:1px solid #dcdcdc;background:#fdfdfd"></div>
<div class="abs" style="left:485px;top:715px;width:23px;height:15px;border-left:1px solid #e0e0e0;background:#f4f4f4"></div>
<svg style="left:492.600px;top:721px" width="8" height="5" viewBox="0 0 8 5"><path d="M0.200 0h7.400L3.900 4.300z" fill="#b8c0dc"/></svg>
<span class="t" style="left:289.400px;top:716.600px;color:#9c9cac">Standard</span>
<div class="abs" style="left:512px;top:715px;width:158px;height:16px;border:1px solid #dcdcdc;background:#fff"></div>
<svg style="left:677px;top:714.400px" width="16" height="16" viewBox="0 0 16 16"><circle cx="10.400" cy="5" r="3.800" fill="#e8e8e8" stroke="#a4a4a4" stroke-width="1.400"/><path d="M7.600 8L1.400 14.200" stroke="#1c1c1c" stroke-width="2" stroke-linecap="round"/></svg>
<svg style="left:1339px;top:713.600px" width="17" height="17" viewBox="0 0 17 17"><defs><linearGradient id="tc" x1="0" y1="0" x2="0" y2="1"><stop offset="0" stop-color="#7cc8ec"/><stop offset="1" stop-color="#2a9cdc"/></linearGradient></defs><rect x="0.400" y="0.600" width="14.800" height="13" rx="1.600" fill="#f0f0f0" stroke="#d8d8d8" stroke-width="0.500"/><path d="M5.600 4.200v9.200M8 4.200v9.200M10.400 4.200v9.200M12.800 4.200v9.200M0.600 6.800h14.400M0.600 9.400h14.400M0.600 12h14.400" stroke="#dcdcdc" stroke-width="0.500"/><rect x="2.800" y="4" width="2.600" height="9.600" fill="#8ed48e"/><rect x="3.600" y="4" width="1" height="9.600" fill="#c8ecb8"/><rect x="0.400" y="0.600" width="14.800" height="3.600" rx="1.600" fill="url(#tc)"/><path d="M7.400 8.400l7 6.600" stroke="#8e8e8e" stroke-width="2"/><circle cx="7.600" cy="8.600" r="1.300" fill="#a4a4a4"/><circle cx="14.400" cy="15" r="1.300" fill="#a4a4a4"/><path d="M7.200 15.400l3.800-3.400" stroke="#e8b41c" stroke-width="2"/><path d="M11 12l3.600-3.600" stroke="#b4b8bc" stroke-width="1.200"/></svg><svg style="left:1364.800px;top:720px" width="8" height="5" viewBox="0 0 8 5"><path d="M0.2 0h7.4L3.9 4.3z" fill="#2f4899"/></svg><svg style="left:1387.200px;top:716.600px" width="17" height="12" viewBox="0 0 17 12"><path d="M0.200 10.400L5.200 7.400" stroke="#8c8c8c" stroke-width="1.200" stroke-dasharray="0.900 0.500"/><path d="M4.600 6.400L6.400 3.200 8.800 4.400 10.800 3 11.400 0.800 14.400 0 16 2.200 15.600 5 12.800 6 11 6.600 10.200 9 7.600 10.200z" fill="#1f7ad2"/><path d="M11.800 1.400l2.600 3.600M7 4.600l2.400 3.800" stroke="#6ab4f0" stroke-width="1"/><path d="M9.400 4.800l2.600 0.800" stroke="#0f5aa8" stroke-width="0.800"/></svg>
<div class="abs" id="th">
<div class="thc" style="border-left:0;left:0px;width:53px"></div>
<div class="thc" style="left:53px;width:310px">Kurzname</div>
<div class="thc" style="left:363px;width:538px">Firma</div>
<div class="thc" style="left:901px;width:138px">Zusatz 1</div>
<div class="thc" style="left:1039px;width:138px">Typ</div>
<div class="thc" style="left:1177px;width:138px"><span style="letter-spacing:0.1px">Geschäftsbeziehung</span></div>
<div class="thc" style="left:1315px;width:138px">Telefon</div>
</div>
<svg style="left:69.800px;top:747.200px" width="9" height="5" viewBox="0 0 9 5"><defs><linearGradient id="su" x1="0" y1="0" x2="0" y2="1"><stop offset="0" stop-color="#3a7ac8"/><stop offset="1" stop-color="#1c4890"/></linearGradient></defs><path d="M0.200 4.800L4.300 0.200 8.400 4.800z" fill="url(#su)"/></svg>
<div class="row" style="top:760px;background:#c0d3f1">
<span class="t" style="left:60px">AT BERNDORF</span><span class="t" style="left:370px;letter-spacing:0.36px">AT Kundentestsystem GMBH - BITTE NICHT</span>
<span class="t" style="left:908px">ÄNDERN</span>
<span class="t" style="left:1046px">U</span><span class="t" style="left:1210px;letter-spacing:0.32px">INTERESSENT</span><span class="t" style="left:1322.600px">+43 (1) 32345</span>
</div>
<svg style="left:18.100px;top:763.1px" width="17" height="17" viewBox="0 0 17 17"><defs><linearGradient id="gb" x1="0" y1="0" x2="1" y2="0"><stop offset="0" stop-color="#9a9c9e"/><stop offset="0.600" stop-color="#c4c4c4"/><stop offset="1" stop-color="#a8a8a8"/></linearGradient><radialGradient id="gs" cx="0.500" cy="0.300" r="0.800"><stop offset="0" stop-color="#4a4a4a"/><stop offset="1" stop-color="#161616"/></radialGradient></defs><path d="M6.500 2.600l1-2.200h6.800l1 2.200V15.800H6.500z" fill="url(#gb)"/><rect x="6.500" y="15.400" width="9.800" height="0.800" fill="#b4b4b4"/><g fill="#2a9ce2"><rect x="6.900" y="3.300" width="1.400" height="2.300"/><rect x="9.000" y="3.300" width="1.300" height="2.300"/><rect x="11.000" y="3.300" width="1.300" height="2.300"/><rect x="13.000" y="3.300" width="1.700" height="2.300"/><rect x="6.900" y="7.300" width="1.400" height="2.100"/><rect x="9.000" y="7.300" width="1.300" height="2.100"/><rect x="11.000" y="7.300" width="1.300" height="2.100"/><rect x="13.000" y="7.300" width="1.700" height="2.100"/><rect x="6.900" y="11.300" width="1.400" height="4.000"/><rect x="9.000" y="11.300" width="1.300" height="4.000"/><rect x="11.000" y="11.300" width="1.300" height="4.000"/><rect x="13.000" y="11.300" width="1.700" height="4.000"/></g><path d="M0.300 16.400v-2.800c0-2.200 1.600-3.200 4.400-3.200s4.400 1 4.400 3.200v2.800z" fill="url(#gs)"/><path d="M4.100 10.400h1.300l0.400 4-1 1.200-1-1.200z" fill="#b09a1c"/><path d="M3.600 10.400l1.100 1 1.100-1z" fill="#e8e4d0"/><ellipse cx="4.800" cy="7.800" rx="1.700" ry="2.400" fill="#f0b898"/><path d="M2.800 7c-0.200-3.800 4.200-3.800 4-0.200-0.800-1-3-1.200-4 0.200z" fill="#7c7c7c"/></svg><svg style="left:40.700px;top:770.8px" width="8" height="5" viewBox="0 0 8 5"><path d="M0.2 0h7.4L3.9 4.3z" fill="#2f4899"/></svg><svg style="left:1194.400px;top:766.4px" width="14" height="14" viewBox="0 0 14 14"><circle cx="6" cy="8" r="4.900" fill="#f2a230"/><path d="M0.600 8.200C-0.200 1 9.600-1.400 11.600 5.600 9.400 5.800 7.600 5 6.600 3.800 5.400 6.200 3 7.600 0.600 8.200z" fill="#3c3a38"/><path d="M9.400 1.600l3.200-1.400 1 2.600-2.400 1.400z" fill="#b4daf6"/><circle cx="4.200" cy="9" r="0.500" fill="#b87414"/><circle cx="7.800" cy="9" r="0.500" fill="#b87414"/></svg>
<div class="row" style="top:787px;background:#fefefe">
<span class="t" style="left:60px">AT BERNDORF</span><span class="t" style="left:370px;letter-spacing:0.36px">AT Kundentestsystem GMBH - BITTE NICHT</span>
<span class="t" style="left:1046px">U</span><span class="t" style="left:1210px;letter-spacing:0.32px">INTERESSENT</span><span class="t" style="left:1322.600px">+43 (1) 32345</span>
</div>
<svg style="left:18.100px;top:790.1px" width="17" height="17" viewBox="0 0 17 17"><defs><linearGradient id="gb" x1="0" y1="0" x2="1" y2="0"><stop offset="0" stop-color="#9a9c9e"/><stop offset="0.600" stop-color="#c4c4c4"/><stop offset="1" stop-color="#a8a8a8"/></linearGradient><radialGradient id="gs" cx="0.500" cy="0.300" r="0.800"><stop offset="0" stop-color="#4a4a4a"/><stop offset="1" stop-color="#161616"/></radialGradient></defs><path d="M6.500 2.600l1-2.200h6.800l1 2.200V15.800H6.500z" fill="url(#gb)"/><rect x="6.500" y="15.400" width="9.800" height="0.800" fill="#b4b4b4"/><g fill="#2a9ce2"><rect x="6.900" y="3.300" width="1.400" height="2.300"/><rect x="9.000" y="3.300" width="1.300" height="2.300"/><rect x="11.000" y="3.300" width="1.300" height="2.300"/><rect x="13.000" y="3.300" width="1.700" height="2.300"/><rect x="6.900" y="7.300" width="1.400" height="2.100"/><rect x="9.000" y="7.300" width="1.300" height="2.100"/><rect x="11.000" y="7.300" width="1.300" height="2.100"/><rect x="13.000" y="7.300" width="1.700" height="2.100"/><rect x="6.900" y="11.300" width="1.400" height="4.000"/><rect x="9.000" y="11.300" width="1.300" height="4.000"/><rect x="11.000" y="11.300" width="1.300" height="4.000"/><rect x="13.000" y="11.300" width="1.700" height="4.000"/></g><path d="M0.300 16.400v-2.800c0-2.200 1.600-3.200 4.400-3.200s4.400 1 4.400 3.200v2.800z" fill="url(#gs)"/><path d="M4.100 10.400h1.300l0.400 4-1 1.200-1-1.200z" fill="#b09a1c"/><path d="M3.600 10.400l1.100 1 1.100-1z" fill="#e8e4d0"/><ellipse cx="4.800" cy="7.800" rx="1.700" ry="2.400" fill="#f0b898"/><path d="M2.800 7c-0.200-3.800 4.200-3.800 4-0.200-0.800-1-3-1.200-4 0.200z" fill="#7c7c7c"/></svg><svg style="left:40.700px;top:797.8px" width="8" height="5" viewBox="0 0 8 5"><path d="M0.2 0h7.4L3.9 4.3z" fill="#2f4899"/></svg><svg style="left:1194.400px;top:793.4px" width="14" height="14" viewBox="0 0 14 14"><circle cx="6" cy="8" r="4.900" fill="#f2a230"/><path d="M0.600 8.200C-0.200 1 9.600-1.400 11.600 5.600 9.400 5.800 7.600 5 6.600 3.800 5.400 6.200 3 7.600 0.600 8.200z" fill="#3c3a38"/><path d="M9.400 1.600l3.200-1.400 1 2.600-2.400 1.400z" fill="#b4daf6"/><circle cx="4.200" cy="9" r="0.500" fill="#b87414"/><circle cx="7.800" cy="9" r="0.500" fill="#b87414"/></svg>
<div class="abs" style="left:10px;top:760px;width:1px;height:26px;background:#fefefe"></div>
<div class="abs" style="left:10px;top:813px;width:1404px;height:1px;background:#e4e4e4"></div>
<div class="abs" style="left:10px;top:817px;width:1404px;height:16px;background:#f0f0f0"></div>
<div class="abs" style="left:27px;top:817px;width:676px;height:15px;background:#c8c8c8"></div>
<div class="abs" style="left:10px;top:833px;width:1404px;height:1px;background:#bdbdbd"></div>
<svg style="left:14px;top:820.600px" width="6" height="8" viewBox="0 0 6 8"><path d="M5 0.800L1.6 4 5 7.200" fill="none" stroke="#3c3c3c" stroke-width="1.6"/></svg><svg style="left:1401.600px;top:820.600px" width="6" height="8" viewBox="0 0 6 8"><path d="M1 0.800L4.400 4 1 7.200" fill="none" stroke="#3c3c3c" stroke-width="1.6"/></svg>
<div class="pbtn" style="left:14px"></div>
<svg style="left:24.0px;top:845.800px" width="10" height="7" viewBox="0 0 10 7"><path d="M1 0.500v6" stroke="#bcc4e0" stroke-width="1.300"/><path d="M9 0.500v6L3.400 3.500z" fill="#bcc4e0"/></svg>
<div class="pbtn" style="left:46px"></div>
<svg style="left:57.0px;top:845.800px" width="8" height="7" viewBox="0 0 8 7"><path d="M7 0.500v6L1.400 3.500z" fill="#bcc4e0"/></svg>
<div class="pbtn" style="left:115px"></div>
<svg style="left:126.0px;top:845.800px" width="8" height="7" viewBox="0 0 8 7"><path d="M1 0.500v6L6.600 3.500z" fill="#bcc4e0"/></svg>
<div class="pbtn" style="left:147px"></div>
<svg style="left:157.0px;top:845.800px" width="10" height="7" viewBox="0 0 10 7"><path d="M9 0.500v6" stroke="#bcc4e0" stroke-width="1.300"/><path d="M1 0.500v6L6.600 3.500z" fill="#bcc4e0"/></svg>
<div class="abs" style="left:85px;top:838px;width:21px;height:19px;border:1px solid #b4b4b4;background:#fff;text-align:center;line-height:19.5px;font-size:11px">1</div>
<span class="t" style="left:195.400px;top:842px">2 Einträge</span>
<svg style="left:1425px;top:751.400px" width="6" height="9" viewBox="0 0 6 9"><path d="M5 0.800L1.400 4.500 5 8.200" fill="none" stroke="#2f4899" stroke-width="1.600"/></svg>
<div class="abs" id="leftedge"></div>
</body>
</html>
